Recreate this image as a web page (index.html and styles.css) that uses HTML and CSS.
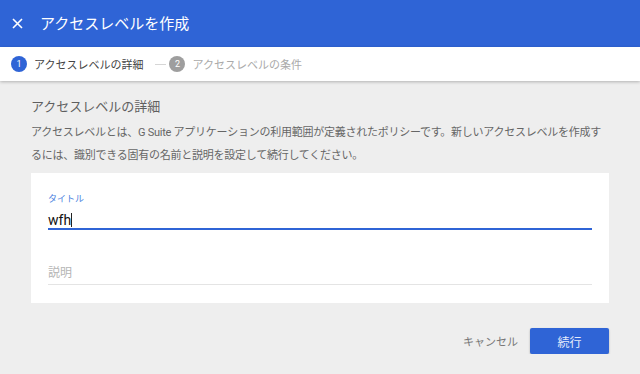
FILE: index.html
```html
<!DOCTYPE html>
<html lang="ja">
<head>
    <meta charset="UTF-8">
    <meta name="viewport" content="width=device-width, initial-scale=1.0">
    <title>アクセスレベルを作成</title>
    <link rel="stylesheet" href="styles.css">
</head>
<body>
    <header class="topbar">
        <svg class="close-icon" width="11" height="11" viewBox="0 0 11 11">
            <path d="M1 1 L10 10 M10 1 L1 10" stroke="#fff" stroke-width="1.6" fill="none"/>
        </svg>
        <h1>アクセスレベルを作成</h1>
    </header>

    <nav class="stepper">
        <span class="step-num active">1</span>
        <span class="step-label active">アクセスレベルの詳細</span>
        <span class="step-dash"></span>
        <span class="step-num">2</span>
        <span class="step-label">アクセスレベルの条件</span>
    </nav>

    <main class="content">
        <h2>アクセスレベルの詳細</h2>
        <p class="intro">アクセスレベルとは、G Suite アプリケーションの利用範囲が定義されたポリシーです。新しいアクセスレベルを作成するには、識別できる固有の名前と説明を設定して続行してください。</p>

        <div class="card">
            <label class="field-label">タイトル</label>
            <div class="field focused">wfh<span class="caret"></span></div>
            <div class="field placeholder">説明</div>
        </div>

        <div class="actions">
            <button class="btn-text">キャンセル</button>
            <button class="btn-primary">続行</button>
        </div>
    </main>
</body>
</html>
```

FILE: styles.css
```css
body {
    margin: 0;
    padding: 0;
    background: #eeeeee;
    font-family: Roboto, "Noto Sans CJK JP", sans-serif;
    color: #333;
}
.topbar {
    height: 47px;
    background: #2f64d6;
    display: flex;
    align-items: center;
    padding-left: 12px;
}
.close-icon {
    display: block;
}
.topbar h1 {
    margin: 0 0 0 17px;
    font-size: 15px;
    font-weight: 400;
    color: #fff;
    line-height: 20px;
}
.stepper {
    height: 34px;
    background: #fff;
    display: flex;
    align-items: center;
    padding-left: 11px;
    box-shadow: 0 1px 3px rgba(0, 0, 0, 0.25); /* 下の影 */
    position: relative;
}
.step-num {
    width: 16px;
    height: 16px;
    border-radius: 50%;
    background: #9e9e9e;
    color: #fff;
    font-size: 9px;
    line-height: 16px;
    text-align: center;
}
.step-num.active {
    background: #2f64d6;
}
.step-label {
    margin-left: 7px;
    font-size: 11px;
    color: #aaa;
}
.step-label.active {
    color: #444;
}
.step-dash {
    width: 11px;
    height: 1px;
    background: #d6d6d6;
    margin: 0 3px 0 12px;
}
.content {
    padding: 0 31px;
}
.content h2 {
    margin: 16px 0 0;
    font-size: 13px;
    font-weight: 400;
    line-height: 20px;
    color: #5f5f5f;
}
.intro {
    margin: 4px 0 0;
    font-size: 11px;
    line-height: 23px;
    letter-spacing: -0.25px;
    color: #666;
}
.card {
    background: #fff;
    margin-top: 6px;
    padding: 20px 17px 18px;
}
.field-label {
    display: block;
    font-size: 9px;
    line-height: 12px;
    color: #4a7fe0;
}
.field {
    margin-top: 7px;
    font-size: 14px;
    line-height: 16px;
    color: #111;
    border-bottom: 2px solid #2f64d6;
}
.caret {
    display: inline-block;
    width: 1px;
    height: 14px;
    background: #222;
    vertical-align: -2px;
}
.field.placeholder {
    margin-top: 35px;
    font-size: 12px;
    color: #b5b5b5;
    padding-bottom: 3px;
    border-bottom: 1px solid #e4e4e4;
}
.actions {
    display: flex;
    justify-content: flex-end;
    align-items: center;
    gap: 12px;
    margin-top: 25px;
}
button {
    font-family: Roboto, "Noto Sans CJK JP", sans-serif;
    border: none;
    cursor: pointer;
}
.btn-text {
    background: none;
    padding: 0;
    font-size: 11px;
    color: #777;
}
.btn-primary {
    width: 79px;
    height: 26px;
    background: #2f64d6;
    color: #e6ecfb;
    font-size: 12px;
    border-radius: 2px;
    box-shadow: 0 1px 2px rgba(0, 0, 0, 0.3);
}
```
